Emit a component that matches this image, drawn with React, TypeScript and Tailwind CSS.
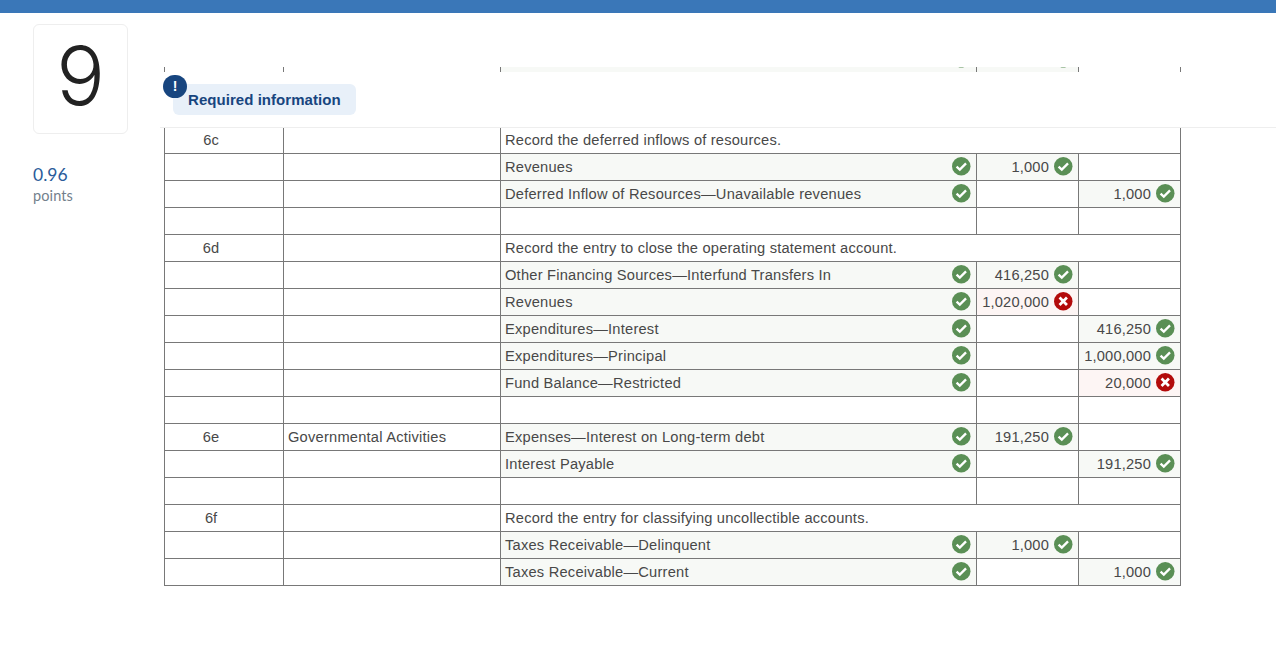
type Mark = "ok" | "bad";

interface Row {
  no?: string;
  book?: string;
  note?: string;
  account?: string;
  debit?: string;
  debitMark?: Mark;
  credit?: string;
  creditMark?: Mark;
}

const ROWS: Row[] = [
  { no: "6c", note: "Record the deferred inflows of resources." },
  { account: "Revenues", debit: "1,000", debitMark: "ok" },
  { account: "Deferred Inflow of Resources—Unavailable revenues", credit: "1,000", creditMark: "ok" },
  {},
  { no: "6d", note: "Record the entry to close the operating statement account." },
  { account: "Other Financing Sources—Interfund Transfers In", debit: "416,250", debitMark: "ok" },
  { account: "Revenues", debit: "1,020,000", debitMark: "bad" },
  { account: "Expenditures—Interest", credit: "416,250", creditMark: "ok" },
  { account: "Expenditures—Principal", credit: "1,000,000", creditMark: "ok" },
  { account: "Fund Balance—Restricted", credit: "20,000", creditMark: "bad" },
  {},
  { no: "6e", book: "Governmental Activities", account: "Expenses—Interest on Long-term debt", debit: "191,250", debitMark: "ok" },
  { account: "Interest Payable", credit: "191,250", creditMark: "ok" },
  {},
  { no: "6f", note: "Record the entry for classifying uncollectible accounts." },
  { account: "Taxes Receivable—Delinquent", debit: "1,000", debitMark: "ok" },
  { account: "Taxes Receivable—Current", credit: "1,000", creditMark: "ok" },
];

const CELL = "border border-[#787878] p-0 h-[27px] align-middle";
const OK_FILL = "bg-[#f7f9f6]";
const BAD_FILL = "bg-[#fdf5f4]";

function MarkIcon({ mark }: { mark: Mark }) {
  if (mark === "ok") {
    return (
      <svg viewBox="0 0 19 19" className="w-[18.5px] h-[18.5px] shrink-0">
        <circle cx="9.5" cy="9.5" r="9.5" fill="#5a8f55" />
        <path d="M4.7 9.8l3.3 3.1 6.4-6.3" fill="none" stroke="#fff" strokeWidth="2.4" />
      </svg>
    );
  }
  return (
    <svg viewBox="0 0 19 19" className="w-[18.5px] h-[18.5px] shrink-0">
      <circle cx="9.5" cy="9.5" r="9.5" fill="#b30b0b" />
      <path d="M5.7 5.7l7.6 7.6M13.3 5.7l-7.6 7.6" fill="none" stroke="#fff" strokeWidth="2.8" />
    </svg>
  );
}

function AmountCell({ value, mark }: { value?: string; mark?: Mark }) {
  if (!mark) return <td className={CELL} />;
  return (
    <td className={`${CELL} ${mark === "ok" ? OK_FILL : BAD_FILL}`}>
      <div className="flex items-center justify-end gap-[5px] pr-[5.5px]">
        <span className="tracking-[0.18px]">{value}</span>
        <MarkIcon mark={mark} />
      </div>
    </td>
  );
}

function TableRow({ row }: { row: Row }) {
  return (
    <tr>
      <td className={`${CELL} text-center pr-[26px]`}>{row.no}</td>
      <td className={`${CELL} pl-[4px] tracking-[0.22px]`}>{row.book}</td>
      {row.note ? (
        <td colSpan={3} className={`${CELL} pl-[4px] tracking-[0.2px]`}>
          {row.note}
        </td>
      ) : row.account ? (
        <>
          <td className={`${CELL} ${OK_FILL}`}>
            <div className="flex items-center justify-between pl-[4px] pr-[5.5px]">
              <span className="tracking-[0.22px]">{row.account}</span>
              <MarkIcon mark="ok" />
            </div>
          </td>
          <AmountCell value={row.debit} mark={row.debitMark} />
          <AmountCell value={row.credit} mark={row.creditMark} />
        </>
      ) : (
        <>
          <td className={CELL} />
          <td className={CELL} />
          <td className={CELL} />
        </>
      )}
    </tr>
  );
}

/* the row scrolled away under the sticky header, only its last pixels show */
function ClippedRow() {
  const cell = "border border-t-0 border-[#787878] p-0 h-[5px]";
  const peek = (
    <div className="h-[4px] overflow-hidden flex justify-end pr-[5.5px]">
      <div className="mt-[-18px]">
        <MarkIcon mark="ok" />
      </div>
    </div>
  );
  return (
    <tr>
      <td className={cell} />
      <td className={cell} />
      <td className={`${cell} ${OK_FILL}`}>{peek}</td>
      <td className={`${cell} ${OK_FILL}`}>{peek}</td>
      <td className={cell} />
    </tr>
  );
}

export default function App() {
  return (
    <div className="min-h-[658px] bg-white font-['Liberation_Sans',Arial,sans-serif] overflow-hidden">
      <div className="h-[13px] bg-[#3a77b8]" />
      <div className="flex">
        {/* Question number + points */}
        <div className="w-[164px] shrink-0 pl-[33px] pt-[11px] font-['Lato',sans-serif]">
          <div className="w-[95px] h-[110px] border border-[#eeeeee] rounded-[6px] flex items-center justify-center pb-[5px] font-['Inter',sans-serif] font-[350] text-[81px] leading-none text-[#222222]">
            9
          </div>
          <div className="mt-[30px] text-[17.5px] leading-[22px] text-[#2a5c9a]">0.96</div>
          <div className="text-[14.5px] tracking-[0.1px] leading-[20px] text-[#737f8c]">points</div>
        </div>

        {/* Journal table, with the sticky header over it */}
        <div className="relative flex-1 pt-[54px]">
          <table className="table-fixed border-collapse w-[1016px] text-[14.67px] text-[#484848]">
            <colgroup>
              <col className="w-[119px]" />
              <col className="w-[217px]" />
              <col className="w-[476px]" />
              <col className="w-[102px]" />
              <col className="w-[102px]" />
            </colgroup>
            <tbody>
              <ClippedRow />
              <tr>
                <td colSpan={5} className="p-0 h-[54px]" />
              </tr>
              {ROWS.map((row, i) => (
                <TableRow key={i} row={row} />
              ))}
            </tbody>
          </table>

          <div className="absolute top-[59px] left-[-4px] right-0 h-[56px] bg-white border-b border-[#eeeeee]">
            <div className="relative ml-[13px] mt-[12px] w-[183px] h-[31px] rounded-[6px] bg-[#e8f0f9] pl-[15px] pt-[1px] flex items-center text-[15px] tracking-[0.05px] font-bold text-[#17457f]">
              <span className="absolute left-[-10px] top-[-9px] w-[24px] h-[23px] rounded-full bg-[#17457f] text-white flex items-center justify-center text-[14px] font-bold">
                !
              </span>
              Required information
            </div>
          </div>
        </div>
      </div>
    </div>
  );
}
